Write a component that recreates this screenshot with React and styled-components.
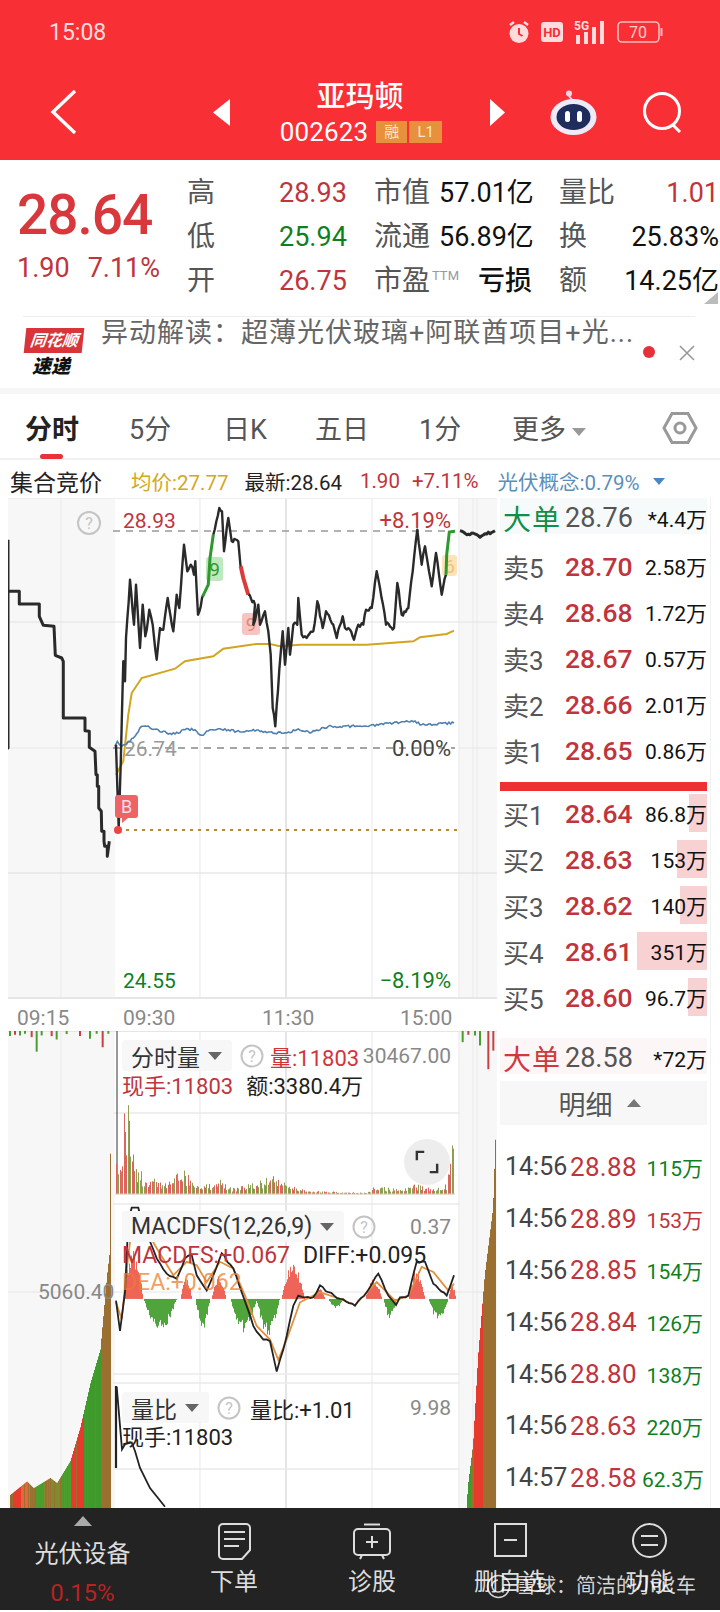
import React from "react";
import styled, { createGlobalStyle } from "styled-components";

const GlobalStyle = createGlobalStyle`
  html, body {
    margin: 0;
    padding: 0;
    background: #fff;
    font-family: Roboto, "Noto Sans CJK SC", sans-serif;
  }
  * { box-sizing: border-box; }
`;

const RED = "#f92f36";
const UP = "#c0343c";
const DOWN = "#0f7f1f";

const Page = styled.div`
  position: relative;
  width: 720px;
  height: 1612px;
  overflow: hidden;
  background: #fff;
  display: flex;
  flex-direction: column;
`;

/* header */
const Header = styled.header`
  height: 160px;
  background: ${RED};
  color: #fff;
  flex: none;
`;
const StatusBar = styled.div`
  display: flex;
  align-items: center;
  height: 64px;
  padding: 0 57px 0 49px;
  color: #ffdcdc;
`;
const Clock = styled.span`
  font-size: 23px;
  margin-right: auto;
`;
const StatusIcons = styled.div`
  display: flex;
  align-items: center;
  gap: 11px;
`;
const NavBar = styled.div`
  display: grid;
  grid-template-columns: 163px 17px 260px 15px 45px 47px 46px 40px;
  align-items: center;
  height: 96px;
  padding: 0 37px 0 50px;
`;
const TitleBlock = styled.div`
  display: flex;
  flex-direction: column;
  align-items: center;
`;
const StockName = styled.div`
  font-size: 29px;
  line-height: 34px;
  font-weight: 500;
  margin-bottom: 6px;
`;
const CodeRow = styled.div`
  display: flex;
  align-items: center;
  gap: 2px;
  height: 24px;
  padding-left: 2px;
`;
const Code = styled.span`
  font-size: 26px;
  letter-spacing: 0.1px;
  margin-right: 6px;
`;
const Badge = styled.span`
  width: ${(p) => p.$w}px;
  height: 22px;
  background: #e8913c;
  color: #fde7c8;
  font-size: 15px;
  text-align: center;
  line-height: 22px;
`;

/* quote */
const Quote = styled.section`
  position: relative;
  display: flex;
  height: 156px;
  padding: 11px 0 0 17px;
  flex: none;
`;
const PriceBlock = styled.div`
  width: 170px;
  color: ${UP};
`;
const BigPrice = styled.div`
  font-size: 55px;
  font-weight: 500;
  line-height: 60px;
  margin-top: 14px;
  letter-spacing: -1px;
  color: #d8383c;
`;
const ChangeRow = styled.div`
  display: flex;
  gap: 18px;
  font-size: 27px;
  line-height: 32px;
  margin-top: 7px;
`;
const StatGrid = styled.div`
  display: grid;
  grid-template-columns: 92px 95px 65px 93px 83px 104px;
  grid-auto-rows: 44px;
  align-items: center;
  height: 132px;
  white-space: nowrap;
`;
const StatLabel = styled.span`
  font-size: 28px;
  line-height: 36px;
  margin: -1px 0 0 ${(p) => p.$ml || 0}px;
  color: #555;
`;
const StatValue = styled.span`
  font-size: 27px;
  line-height: 36px;
  color: ${(p) => p.$color || "#111"};
  text-align: ${(p) => (p.$left ? "left" : "right")};
  font-weight: ${(p) => (p.$bold ? 500 : 400)};
  white-space: nowrap;
`;
const Ttm = styled.sup`
  font-size: 13px;
  color: #999;
  vertical-align: 10px;
  line-height: 0;
  margin-left: 2px;
`;
const CornerMark = styled.div`
  position: absolute;
  right: 2px;
  bottom: 12px;
  width: 0;
  height: 0;
  border-left: 14px solid transparent;
  border-bottom: 12px solid #bbb;
`;

/* news strip */
const News = styled.section`
  position: relative;
  display: flex;
  height: 72px;
  margin: 0 25px 0 23px;
  border-top: 1px solid #eee;
  flex: none;
`;
const NewsLogo = styled.div`
  width: 78px;
  padding: 11px 0 0 2px;
  display: flex;
  flex-direction: column;
  align-items: flex-start;
`;
const LogoTop = styled.div`
  width: 58px;
  height: 25px;
  background: #d8343a;
  color: #fff;
  font-size: 16px;
  font-weight: 700;
  font-style: italic;
  line-height: 25px;
  text-align: center;
  white-space: nowrap;
  overflow: hidden;
  transform: skewX(-6deg);
`;
const LogoBottom = styled.div`
  font-size: 19px;
  font-weight: 900;
  font-style: italic;
  line-height: 21px;
  margin: 3px 0 0 7px;
  color: #111;
`;
const NewsText = styled.div`
  font-size: 27px;
  line-height: 32px;
  color: #666;
  white-space: nowrap;
  letter-spacing: 1px;
`;
const NewsDot = styled.span`
  position: absolute;
  left: 620px;
  top: 29px;
  width: 12px;
  height: 12px;
  border-radius: 50%;
  background: #e5323a;
`;
const NewsClose = styled.span`
  position: absolute;
  left: 656px;
  top: 28px;
  line-height: 0;
`;
const Band = styled.div`
  height: 6px;
  background: #f6f6f6;
  flex: none;
`;

/* tabs */
const Tabs = styled.nav`
  display: grid;
  grid-template-columns: 104px 94px 92px 104px 93px 1fr;
  height: 66px;
  padding-left: 25px;
  border-bottom: 2px solid #f1f1f1;
  position: relative;
  flex: none;
`;
const Tab = styled.div`
  position: relative;
  font-size: 27px;
  line-height: 72px;
  color: ${(p) => (p.$active ? "#222" : "#555")};
  font-weight: ${(p) => (p.$active ? 700 : 400)};
  white-space: nowrap;
  ${(p) =>
    p.$active &&
    `&::after {
      content: "";
      position: absolute;
      left: 15px;
      top: 60px;
      width: 23px;
      height: 5px;
      border-radius: 3px;
      background: #e8323a;
    }`}
`;
const Caret = styled.span`
  display: inline-block;
  width: 0;
  height: 0;
  border-left: ${(p) => p.$size || 7}px solid transparent;
  border-right: ${(p) => p.$size || 7}px solid transparent;
  border-${(p) => (p.$up ? "bottom" : "top")}: ${(p) => (p.$size || 7) + 1}px solid ${(p) => p.$color || "#999"};
`;
const MoreCaret = styled(Caret)`
  margin-left: 6px;
  vertical-align: 3px;
`;
const NavCaret = styled(Caret)`
  margin-top: 8px;
`;
const GearSlot = styled.div`
  position: absolute;
  left: 662px;
  top: 16px;
  line-height: 0;
`;

/* info bar */
const InfoBar = styled.div`
  display: flex;
  align-items: center;
  height: 38px;
  padding: 4px 0 0 10px;
  font-size: 20.5px;
  white-space: nowrap;
  flex: none;
`;
const InfoTitle = styled.span`
  font-size: 23px;
  color: #222;
  width: 121px;
`;
const InfoItem = styled.span`
  color: ${(p) => p.$color || "#222"};
  margin-right: ${(p) => p.$gap}px;
`;

/* body */
const Body = styled.div`
  display: flex;
  height: 1010px;
  padding-left: 8px;
  flex: none;
`;
const ChartColumn = styled.div`
  width: 489px;
  flex: none;
`;
const PriceChart = styled.svg`
  display: block;
  width: 489px;
  height: 501px;
  font-family: Roboto, "Noto Sans CJK SC", sans-serif;
`;
const TimeAxis = styled.div`
  display: grid;
  grid-template-columns: 106px 139px 138px auto;
  height: 32px;
  padding-left: 9px;
  font-size: 21px;
  line-height: 38px;
  color: #888;
`;
const LowerChart = styled.div`
  position: relative;
  height: 477px;
`;
const LowerSvg = styled.svg`
  display: block;
  width: 489px;
  height: 477px;
`;
const Legend = styled.div`
  position: absolute;
  left: 114px;
  top: ${(p) => p.$top}px;
  width: 329px;
  font-size: 22px;
  white-space: nowrap;
`;
const LegendRow = styled.div`
  display: flex;
  align-items: center;
  height: ${(p) => p.$h || 28}px;
`;
const Chip = styled.div`
  display: flex;
  align-items: center;
  gap: 8px;
  height: 31px;
  padding: 0 10px 0 9px;
  background: #f7f7f7;
  border-radius: 3px;
  color: #333;
  font-size: 23px;
  margin-right: 8px;
`;
const LegendText = styled.span`
  color: ${(p) => p.$color || "#222"};
  margin-left: ${(p) => p.$ml || 0}px;
  opacity: ${(p) => p.$fade || 1};
  font-size: ${(p) => p.$size || 22}px;
`;
const AxisValue = styled.span`
  margin-left: auto;
  color: #888;
  font-size: 21px;
`;
const LeftValue = styled.span`
  position: absolute;
  left: 30px;
  top: 249px;
  font-size: 21px;
  color: #888;
`;
const ExpandButton = styled.div`
  position: absolute;
  left: 396px;
  top: 108px;
  width: 46px;
  height: 46px;
  border-radius: 50%;
  background: rgba(215, 215, 215, 0.45);
  display: flex;
  align-items: center;
  justify-content: center;
`;

/* order book */
const BookColumn = styled.aside`
  width: 214px;
  flex: none;
  display: flex;
  flex-direction: column;
  padding: 0 3px;
  border-right: 1px solid #f2f2f2;
`;
const BigRow = styled.div`
  display: grid;
  grid-template-columns: 62px 78px 1fr;
  align-items: center;
  height: 36px;
  padding-left: 3px;
  background: ${(p) => p.$bg};
  margin: ${(p) => p.$margin || 0};
`;
const BigLabel = styled.span`
  font-size: 28px;
  color: ${(p) => p.$color};
  letter-spacing: 1px;
  white-space: nowrap;
`;
const GreyPrice = styled.span`
  font-size: 27px;
  color: #555;
`;
const Qty = styled.span`
  position: relative;
  font-size: 21px;
  color: ${(p) => p.$color || "#111"};
  text-align: right;
  white-space: nowrap;
`;
const BookGroup = styled.div`
  margin-top: ${(p) => p.$mt}px;
`;
const BookRow = styled.div`
  position: relative;
  display: grid;
  grid-template-columns: 62px 78px 1fr;
  align-items: center;
  height: 46px;
  padding-left: 3px;
`;
const BookLabel = styled.span`
  position: relative;
  font-size: 26px;
  color: #555;
  white-space: nowrap;
`;
const BookPrice = styled.span`
  position: relative;
  font-size: 26.5px;
  font-weight: 500;
  color: ${UP};
`;
const QtyBar = styled.span`
  position: absolute;
  right: 0;
  top: 4px;
  bottom: 4px;
  background: #f8d2d2;
`;
const MidBar = styled.div`
  height: 9px;
  margin-top: 9px;
  background: #ee3030;
`;
const DetailBar = styled.div`
  display: flex;
  align-items: center;
  justify-content: center;
  gap: 14px;
  height: 44px;
  margin: 7px 0 16px;
  background: #f7f7f7;
  font-size: 27px;
  color: #555;
  padding-right: 8px;
`;
const TickRow = styled.div`
  display: grid;
  grid-template-columns: 65px 72px 1fr;
  align-items: center;
  height: 51.8px;
  padding: 0 4px 0 5px;
  white-space: nowrap;
`;
const TickTime = styled.span`
  font-size: 25px;
  color: #444;
`;
const TickPrice = styled.span`
  font-size: 26px;
  color: ${UP};
  letter-spacing: 0.3px;
`;

/* bottom bar */
const BottomBar = styled.footer`
  position: relative;
  height: 102px;
  background: #232323;
  display: grid;
  grid-template-columns: 165px 138px 138px 138px 141px;
  color: #ddd;
  flex: none;
`;
const BottomItem = styled.div`
  display: flex;
  flex-direction: column;
  align-items: center;
  font-size: 24px;
  line-height: 30px;
  white-space: nowrap;
  padding-top: ${(p) => p.$pt || 0}px;
`;
const PlateName = styled.span`
  margin-top: 12px;
  line-height: 32px;
`;
const PlatePct = styled.span`
  margin-top: 8px;
  color: #b82222;
`;
const IconSlot = styled.div`
  height: 41px;
  line-height: 0;
  margin-bottom: 3px;
`;
const Watermark = styled.div`
  position: absolute;
  left: 486px;
  top: 64px;
  display: flex;
  align-items: center;
  gap: 5px;
  font-size: 20px;
  line-height: 28px;
  color: rgba(255, 255, 255, 0.82);
  white-space: nowrap;
`;

/* ---- chart data, read off the picture ---- */
const rnd = (i) => Math.abs(Math.sin(i * 12.9898) * 43758.5453) % 1;
const z2 = (pts) => pts.map(([x, y]) => `${(x / 3).toFixed(1)},${(400 + y / 3).toFixed(1)}`).join(" ");
const z3 = (pts) => pts.map(([x, y]) => `${(x / 3).toFixed(1)},${(980 + y / 2.96).toFixed(1)}`).join(" ");
const lerp = (env, x) => {
  for (let i = 1; i < env.length; i++) {
    if (x <= env[i][0]) {
      const [a, b] = [env[i - 1], env[i]];
      return a[1] + ((b[1] - a[1]) * (x - a[0])) / (b[0] - a[0]);
    }
  }
  return env[env.length - 1][1];
};
// the real lines tick every minute, so roughen the read-off points a bit
const jag = (pts, amp, step = 5) => {
  const out = [pts[0]];
  for (let i = 1; i < pts.length; i++) {
    const [a, b] = [pts[i - 1], pts[i]];
    const n = Math.max(1, Math.floor(Math.abs(b[0] - a[0]) / step));
    for (let k = 1; k <= n; k++) {
      const t = k / n;
      const noise = k === n ? 0 : (rnd(a[0] + k * 3.1) - 0.5) * amp;
      out.push([a[0] + (b[0] - a[0]) * t, a[1] + (b[1] - a[1]) * t + noise]);
    }
  }
  return out;
};

const preLine = [[24,425],[24,1050],[24,580],[58,580],[58,618],[118,618],[118,655],[130,682],[162,685],[166,772],[185,780],[190,790],[190,960],[255,960],[255,998],[268,1000],[268,1048],[285,1060],[288,1130],[292,1130],[292,1165],[296,1165],[296,1230],[304,1240],[305,1300],[312,1300],[312,1330],[314,1345],[322,1345],[322,1375],[328,1330]];
const mainA = [[348,1040],[356,1290],[362,1100],[370,790],[375,850],[378,720],[390,545],[402,680],[408,560],[420,750],[428,620],[436,715],[448,635],[458,680],[470,785],[480,690],[490,695],[503,600],[520,700],[530,590],[538,630],[552,440],[562,520],[572,500],[582,530],[586,490],[594,650],[610,590]];
const greenA = [[608,595],[625,560],[630,480],[640,410]];
const mainB = [[640,410],[658,330],[666,340],[672,460],[685,360],[695,430],[715,430],[722,510]];
const redA = [[722,505],[730,540],[745,590]];
const mainC = [[745,590],[765,620],[760,680],[775,620],[780,680],[795,640],[805,700],[812,770],[818,930],[826,985],[838,815],[848,700],[855,800],[865,690],[870,770],[880,680],[892,680],[895,600],[905,710],[920,720],[940,700],[952,610],[968,690],[978,640],[1000,680],[1010,720],[1028,655],[1035,690],[1045,690],[1062,725],[1075,680],[1090,680],[1098,635],[1115,630],[1130,520],[1140,570],[1158,680],[1182,690],[1192,555],[1205,650],[1225,630],[1238,520],[1252,395],[1265,500],[1275,445],[1295,565],[1308,465],[1325,590],[1338,530]];
const greenB = [[1338,530],[1340,470],[1348,402],[1365,400]];
const afterLine = [[1380,398],[1395,406],[1425,408],[1440,418],[1460,408],[1485,398]];
const avgLine = [[348,1130],[370,1090],[385,950],[395,885],[425,840],[525,812],[555,790],[640,775],[670,752],[770,738],[810,738],[840,745],[900,740],[1100,740],[1240,730],[1260,718],[1340,708],[1362,698]];
const blueLine = [[345,1045],[352,1030],[365,1045],[400,1020],[425,985],[440,985],[500,1005],[525,1008],[555,995],[585,995],[605,1012],[630,995],[660,992],[720,1002],[770,996],[790,1003],[860,1005],[890,995],[935,1003],[985,985],[1100,985],[1180,975],[1235,968],[1265,980],[1362,975]];

const volEnv = [[348,460],[362,530],[375,340],[388,360],[398,500],[410,570],[425,570],[440,600],[470,590],[500,610],[548,560],[600,620],[660,590],[700,620],[820,585],[900,625],[950,630],[1100,635],[1125,615],[1200,625],[1240,605],[1300,620],[1340,610],[1350,520],[1362,450]];
const leftEnv = [[30,1530],[80,1490],[100,1510],[150,1480],[170,1495],[210,1430],[240,1330],[270,1200],[300,1100],[320,880],[327,820],[331,420]];
const rightEnv = [[1400,1570],[1405,1500],[1420,1380],[1435,1120],[1455,880],[1480,680],[1488,450]];
const leftBands = [[60,"#e53a2c"],[90,"#e8653c"],[130,"#4c9e2c"],[180,"#7c8e2c"],[210,"#4c9e2c"],[250,"#e53a2c"],[300,"#3f9a2c"],[340,"#9a6f30"]];
const rightBands = [[1420,"#3f9a2c"],[1450,"#e53a2c"],[1500,"#9a6f30"]];
const macdHumps = [[370,430,800,1],[540,575,880,1],[635,680,880,1],[845,915,845,1],[940,975,915,1],[1095,1145,885,1],[1225,1275,860,1],[1345,1368,905,1],[430,530,1050,0],[585,630,1040,0],[690,770,1050,0],[770,840,1060,0],[985,1030,980,0],[1150,1190,1010,0],[1285,1345,1015,0]];
const macdBlack = [[348,955],[360,1045],[375,930],[385,720],[395,680],[415,680],[425,720],[450,780],[470,830],[500,875],[530,890],[555,830],[575,820],[590,880],[620,925],[640,880],[665,815],[700,860],[725,930],[760,1030],[790,1070],[810,1075],[830,1165],[850,1100],[880,970],[895,940],[915,945],[940,945],[960,910],[985,930],[1020,950],[1065,970],[1100,930],[1135,875],[1165,940],[1188,968],[1200,945],[1225,940],[1250,840],[1275,840],[1300,905],[1340,940],[1362,880]];
const macdOrange = [[348,960],[365,1010],[385,820],[400,710],[430,730],[470,800],[520,880],[560,840],[590,850],[620,900],[660,840],[700,860],[735,940],[770,1030],[810,1070],[835,1130],[860,1070],[900,960],[960,930],[1020,950],[1065,968],[1130,900],[1185,955],[1225,940],[1265,855],[1300,870],[1345,925],[1362,905]];
const ratioLine = [[350,1210],[366,1395],[375,1380],[395,1375],[405,1400],[420,1450],[450,1510],[495,1565]];

const GridBase = ({ top, bottom }) => (
  <>
    <rect x="8" y={top} width="107" height={bottom - top} fill="#f7f7f7" />
    <rect x="459" y={top} width="38" height={bottom - top} fill="#f7f7f7" />
    {[61, 200, 372, 459, 473, 477].map((x) => (
      <line key={x} x1={x} x2={x} y1={top} y2={bottom} stroke="#ececec" strokeWidth="1.2" />
    ))}
    <line x1="286" x2="286" y1={top} y2={bottom} stroke="#d4d4d4" strokeWidth="1.2" />
  </>
);

const Help = ({ cx, cy }) => (
  <g fill="none" stroke="#c4c4c4" strokeWidth="2">
    <circle cx={cx} cy={cy} r="11" />
    <text x={cx} y={cy + 6} fontSize="16" textAnchor="middle" fill="#c4c4c4" stroke="none">?</text>
  </g>
);

const HelpIcon = () => (
  <svg width="24" height="24" viewBox="0 0 24 24">
    <circle cx="12" cy="12" r="10.5" fill="none" stroke="#c4c4c4" strokeWidth="2" />
    <text x="12" y="18" fontSize="16" textAnchor="middle" fill="#c4c4c4">?</text>
  </svg>
);

const Marker = ({ x, y, w, h, fill, color, label }) => (
  <g>
    <rect x={x} y={y} width={w} height={h} rx="3" fill={fill} />
    <text x={x + w / 2} y={y + h / 2 + 7} fontSize="19" textAnchor="middle" fill={color}>{label}</text>
  </g>
);

function PricePanel() {
  const dark = { fill: "none", stroke: "#2a2a2a", strokeWidth: 2.4, strokeLinejoin: "round" };
  const green = { fill: "none", stroke: "#2d9a2d", strokeWidth: 3 };
  return (
    <PriceChart viewBox="8 500 489 501">
      <GridBase top={500} bottom={1001} />
      <line x1="8" x2="497" y1="500" y2="500" stroke="#eee" strokeWidth="2" />
      <line x1="8" x2="497" y1="624" y2="624" stroke="#e2e2e2" />
      <line x1="8" x2="497" y1="875" y2="875" stroke="#dcdcdc" />
      <line x1="8" x2="497" y1="1000" y2="1000" stroke="#e6e6e6" strokeWidth="2" />
      <line x1="8" x2="115" y1="750" y2="750" stroke="#e6e6e6" />
      <line x1="459" x2="497" y1="750" y2="750" stroke="#e6e6e6" />
      <line x1="113" x2="455" y1="533" y2="533" stroke="#999" strokeWidth="1.5" strokeDasharray="7 6" />
      <line x1="113" x2="455" y1="750" y2="750" stroke="#888" strokeWidth="1.5" strokeDasharray="7 6" />
      <line x1="118" x2="459" y1="832" y2="832" stroke="#b78a3a" strokeWidth="2" strokeDasharray="3 5" />

      <text x="123" y="530" fontSize="21" fill={UP}>28.93</text>
      <text x="451" y="530" fontSize="22" fill={UP} textAnchor="end">+8.19%</text>
      <text x="124" y="758" fontSize="21" fill="#999">26.74</text>
      <text x="451" y="758" fontSize="22" fill="#444" textAnchor="end">0.00%</text>
      <text x="123" y="990" fontSize="21" fill={DOWN}>24.55</text>
      <text x="451" y="990" fontSize="22" fill={DOWN} textAnchor="end">−8.19%</text>
      <Help cx={89} cy={525} />

      <Marker x={206} y={559} w={17} h={24} fill="#bfe8bf" color="#2d9a2d" label="9" />
      <Marker x={242} y={615} w={18} h={22} fill="#f7c4c4" color="#e08a70" label="9" />
      <Marker x={442} y={557} w={15} h={21} fill="#fce3b8" color="#eec27a" label="6" />
      <polyline points={z2(avgLine)} fill="none" stroke="#d2a521" strokeWidth="2" />
      <polyline points={z2(jag(blueLine, 7))} fill="none" stroke="#4f80b0" strokeWidth="1.6" />
      <polyline points={z2(preLine)} {...dark} strokeWidth="3" />
      <polyline points={z2(jag(mainA, 16, 4))} {...dark} />
      <polyline points={z2(greenA)} {...green} />
      <polyline points={z2(jag(mainB, 16, 4))} {...dark} />
      <polyline points={z2(redA)} fill="none" stroke="#dd3a3a" strokeWidth="4" />
      <polyline points={z2(jag(mainC, 16, 4))} {...dark} />
      <polyline points={z2(greenB)} {...green} />
      <polyline points={z2(jag(afterLine, 8))} {...dark} strokeWidth="3" />

      <rect x="115" y="797" width="23" height="23" rx="3" fill="#ee6464" />
      <path d="M122 820 L128 820 L122 825 Z" fill="#ee6464" />
      <text x="126.5" y="815" fontSize="18" textAnchor="middle" fill="#fde">B</text>
      <circle cx="118" cy="832" r="4" fill="#ee4444" />
    </PriceChart>
  );
}

function VolumeBars() {
  const out = [];
  for (let x = 348; x <= 1362; x += 4) {
    const top = lerp(volEnv, x);
    const h = (640 - top) * (0.35 + 0.65 * rnd(x));
    const red = rnd(x + 7) > 0.5;
    const px = Math.floor(x / 3) + 0.5;
    out.push(
      <line key={x} x1={px} x2={px} y1={980 + 640 / 2.96} y2={980 + (640 - h) / 2.96} stroke={red ? "#d9655c" : "#8ea050"} strokeWidth="1" />
    );
  }
  return out;
}

function SideBars({ env, from, to, bands }) {
  const out = [];
  for (let x = from; x <= to; x += 3) {
    const top = lerp(env, x);
    const base = bands.find((b) => x <= b[0])[1];
    const color = rnd(x) > 0.8 ? "#9a6f30" : base;
    const px = Math.floor(x / 3) + 0.5;
    out.push(
      <line key={x} x1={px} x2={px} y1={1512} y2={980 + top / 2.96} stroke={color} strokeWidth="1" />
    );
  }
  return out;
}

function DripBars() {
  const left = [[30,172],[45,168],[60,170],[75,165],[95,175],[110,218],[125,170],[155,172],[170,182],[200,166],[240,172],[270,180],[290,165],[308,205],[325,165]];
  const right = [[1388,190],[1405,168],[1425,170],[1440,200],[1465,270],[1480,215]];
  return [...left, ...right].map(([x, y], i) => (
    <line key={x} x1={x / 3} x2={x / 3} y1="1033" y2={980 + y / 2.96} stroke={i % 3 === 1 || x > 1450 ? "#c84040" : "#4c9e2c"} strokeWidth="2" />
  ));
}

function MacdBars() {
  const base = 950;
  const out = [];
  macdHumps.forEach(([a, b, peak, up], k) => {
    for (let x = a; x <= b; x += 3) {
      const t = (x - a) / (b - a);
      const env = Math.sin(Math.PI * t);
      const y = base + (peak - base) * env * (0.6 + 0.4 * rnd(x + k));
      const px = Math.floor(x / 3) + 0.5;
      out.push(
        <line key={`${k}-${x}`} x1={px} x2={px} y1={980 + base / 2.96} y2={980 + y / 2.96} stroke={up ? "#ee6458" : "#4fa53c"} strokeWidth="1" />
      );
    }
  });
  return out;
}

function LowerPanel() {
  return (
    <LowerChart>
      <LowerSvg viewBox="8 1033 489 477">
        <GridBase top={1033} bottom={1510} />
        <line x1="8" x2="497" y1="1033" y2="1033" stroke="#e6e6e6" strokeWidth="2" />
        {[1115, 1206, 1376, 1385, 1471].map((y) => (
          <line key={y} x1="113" x2="460" y1={y} y2={y} stroke="#eaeaea" strokeWidth="1.5" />
        ))}
        <line x1="8" x2="497" y1="1294" y2="1294" stroke="#e6e6e6" />
        <SideBars env={leftEnv} from={30} to={331} bands={leftBands} />
        <SideBars env={rightEnv} from={1400} to={1488} bands={rightBands} />
        <DripBars />
        <line x1="117" x2="117" y1="1033" y2="1190" stroke="#333" strokeWidth="1" />
        <VolumeBars />
        <line x1="115" x2="455" y1="1196" y2="1196" stroke="#d8d0c0" strokeWidth="1" />
        <MacdBars />
        <polyline points={z3(macdOrange)} fill="none" stroke="#e0903e" strokeWidth="1.8" />
        <polyline points={z3(jag(macdBlack, 7, 8))} fill="none" stroke="#222" strokeWidth="1.8" />
        <line x1="116" x2="116" y1="1388" y2="1470" stroke="#222" strokeWidth="2.2" />
        <polyline points={z3(ratioLine)} fill="none" stroke="#222" strokeWidth="1.8" />
      </LowerSvg>

      <LeftValue>5060.40</LeftValue>

      <Legend $top={9}>
        <LegendRow $h={31}>
          <Chip>分时量<Caret $color="#666" /></Chip>
          <HelpIcon />
          <LegendText $color="#d4333a" $ml={6}>量:11803</LegendText>
          <AxisValue>30467.00</AxisValue>
        </LegendRow>
        <LegendRow $h={26}>
          <LegendText $color={UP}>现手:11803</LegendText>
          <LegendText $ml={13}>额:3380.4万</LegendText>
        </LegendRow>
      </Legend>

      <Legend $top={180}>
        <LegendRow $h={31}>
          <Chip>MACDFS(12,26,9)<Caret $color="#666" /></Chip>
          <HelpIcon />
          <AxisValue>0.37</AxisValue>
        </LegendRow>
        <LegendRow $h={27}>
          <LegendText $color={UP} $size={23}>MACDFS:+0.067</LegendText>
          <LegendText $ml={13} $size={23}>DIFF:+0.095</LegendText>
        </LegendRow>
        <LegendRow $h={27}>
          <LegendText $color="#ea7f30" $fade={0.75} $size={23}>DEA:+0.062</LegendText>
        </LegendRow>
      </Legend>

      <Legend $top={361}>
        <LegendRow $h={31}>
          <Chip>量比<Caret $color="#666" /></Chip>
          <HelpIcon />
          <LegendText $ml={9}>量比:+1.01</LegendText>
          <AxisValue>9.98</AxisValue>
        </LegendRow>
        <LegendRow $h={24}>
          <LegendText>现手:11803</LegendText>
        </LegendRow>
      </Legend>

      <ExpandButton>
        <svg width="24" height="24" viewBox="0 0 26 26" fill="none" stroke="#333" strokeWidth="2.6">
          <path d="M2 11V2H10" />
          <path d="M24 15V24H16" />
        </svg>
      </ExpandButton>
    </LowerChart>
  );
}

const asks = [
  ["卖5", "28.70", "2.58万"],
  ["卖4", "28.68", "1.72万"],
  ["卖3", "28.67", "0.57万"],
  ["卖2", "28.66", "2.01万"],
  ["卖1", "28.65", "0.86万"],
];
const bids = [
  ["买1", "28.64", "86.8万", 18],
  ["买2", "28.63", "153万", 30],
  ["买3", "28.62", "140万", 27],
  ["买4", "28.61", "351万", 70],
  ["买5", "28.60", "96.7万", 19],
];
const ticks = [
  ["14:56", "28.88", "115万", DOWN],
  ["14:56", "28.89", "153万", UP],
  ["14:56", "28.85", "154万", DOWN],
  ["14:56", "28.84", "126万", DOWN],
  ["14:56", "28.80", "138万", DOWN],
  ["14:56", "28.63", "220万", DOWN],
  ["14:57", "28.58", "62.3万", DOWN],
];

function OrderBook() {
  return (
    <BookColumn>
      <BigRow $bg="#f7fafa">
        <BigLabel $color="#0f8f4a">大单</BigLabel>
        <GreyPrice>28.76</GreyPrice>
        <Qty>*4.4万</Qty>
      </BigRow>
      <BookGroup $mt={9}>
        {asks.map(([label, price, qty]) => (
          <BookRow key={label}>
            <BookLabel>{label}</BookLabel>
            <BookPrice>{price}</BookPrice>
            <Qty>{qty}</Qty>
          </BookRow>
        ))}
      </BookGroup>
      <MidBar />
      <BookGroup $mt={-1}>
        {bids.map(([label, price, qty, w]) => (
          <BookRow key={label}>
            <QtyBar style={{ width: w }} />
            <BookLabel>{label}</BookLabel>
            <BookPrice>{price}</BookPrice>
            <Qty>{qty}</Qty>
          </BookRow>
        ))}
      </BookGroup>
      <BigRow $bg="#fdf6f6" $margin="18px 0 0">
        <BigLabel $color="#d0393c">大单</BigLabel>
        <GreyPrice>28.58</GreyPrice>
        <Qty>*72万</Qty>
      </BigRow>
      <DetailBar>
        明细
        <Caret $up $size={7} $color="#777" />
      </DetailBar>
      {ticks.map(([time, price, vol, color], i) => (
        <TickRow key={i}>
          <TickTime>{time}</TickTime>
          <TickPrice>{price}</TickPrice>
          <Qty $color={color}>{vol}</Qty>
        </TickRow>
      ))}
    </BookColumn>
  );
}

const StatusGlyphs = () => (
  <StatusIcons>
    <svg width="22" height="24" viewBox="0 0 22 24">
      <circle cx="11" cy="13.5" r="9.5" fill="#ffdcdc" />
      <path d="M11 8v6l3.5 2" fill="none" stroke={RED} strokeWidth="2" />
      <path d="M2 5l4-3M20 5l-4-3" stroke="#ffdcdc" strokeWidth="2.4" />
    </svg>
    <svg width="22" height="20" viewBox="0 0 22 20">
      <rect width="22" height="20" rx="3" fill="#ffdcdc" />
      <text x="11" y="15" fontSize="13" fontWeight="700" textAnchor="middle" fill={RED}>HD</text>
    </svg>
    <svg width="32" height="24" viewBox="0 0 32 24">
      <text x="0" y="10" fontSize="12" fontWeight="700" fill="#ffdcdc">5G</text>
      <g fill="#ffdcdc">
        <rect x="2" y="15" width="4" height="9" />
        <rect x="10" y="12" width="4" height="12" />
        <rect x="18" y="7" width="4" height="17" />
        <rect x="26" y="1" width="4" height="23" />
      </g>
    </svg>
    <svg width="46" height="22" viewBox="0 0 46 22">
      <rect x="1" y="1" width="41" height="20" rx="4" fill="none" stroke="#ffbcbc" strokeWidth="1.6" />
      <rect x="43.5" y="7" width="2" height="8" fill="#ffbcbc" />
      <text x="21" y="17" fontSize="16" textAnchor="middle" fill="#ffcfcf">70</text>
    </svg>
  </StatusIcons>
);

const Robot = () => (
  <svg width="47" height="45" viewBox="0 0 47 45">
    <circle cx="19" cy="3.5" r="3" fill="#f3d5ea" />
    <path d="M19 6 L23 11" stroke="#f3d5ea" strokeWidth="2" />
    <ellipse cx="23.5" cy="27" rx="23" ry="18" fill="#eeeaf8" />
    <ellipse cx="23.5" cy="27" rx="17" ry="13" fill="#1f2d5c" />
    <rect x="15" y="21" width="5" height="11" rx="2.5" fill="#fff" />
    <rect x="27" y="21" width="5" height="11" rx="2.5" fill="#fff" />
  </svg>
);

const MenuIcon = () => (
  <svg width="33" height="37" viewBox="0 0 33 37" fill="none" stroke="#ddd" strokeWidth="2">
    <path d="M5 1h23a4 4 0 0 1 4 4v22l-8 9H5a4 4 0 0 1-4-4V5a4 4 0 0 1 4-4z" />
    <path d="M6 9h21M6 16h21M6 23h15" />
  </svg>
);

const DiagnoseIcon = () => (
  <svg width="38" height="37" viewBox="0 0 38 37" fill="none" stroke="#ddd" strokeWidth="2">
    <path d="M11 1.5h16" />
    <rect x="1" y="6" width="36" height="26" rx="4" />
    <path d="M19 13v12M13 19h12" />
    <path d="M7 36l2-4M31 36l-2-4" />
  </svg>
);

const RemoveIcon = () => (
  <svg width="33" height="34" viewBox="0 0 33 34" fill="none" stroke="#ddd" strokeWidth="2">
    <rect x="1" y="1" width="31" height="32" />
    <path d="M10 17h13" />
  </svg>
);

const MoreIcon = () => (
  <svg width="35" height="35" viewBox="0 0 35 35" fill="none" stroke="#ddd" strokeWidth="2">
    <circle cx="17.5" cy="17.5" r="16.5" />
    <path d="M9 13h17M9 22h17" />
  </svg>
);

export default function App() {
  return (
    <Page>
      <GlobalStyle />
      <Header>
        <StatusBar>
          <Clock>15:08</Clock>
          <StatusGlyphs />
        </StatusBar>
        <NavBar>
          <svg width="27" height="46" viewBox="0 0 27 46" fill="none" stroke="#fff" strokeWidth="3.4">
            <path d="M25 2 L3 23 L25 44" />
          </svg>
          <svg width="17" height="27" viewBox="0 0 17 27"><path d="M17 0V27L0 13.5Z" fill="#fff" /></svg>
          <TitleBlock>
            <StockName>亚玛顿</StockName>
            <CodeRow>
              <Code>002623</Code>
              <Badge $w={31}>融</Badge>
              <Badge $w={33}>L1</Badge>
            </CodeRow>
          </TitleBlock>
          <svg width="15" height="27" viewBox="0 0 15 27"><path d="M0 0V27L15 13.5Z" fill="#fff" /></svg>
          <span />
          <Robot />
          <span />
          <svg width="40" height="42" viewBox="0 0 40 42" fill="none" stroke="#fff" strokeWidth="3">
            <circle cx="19" cy="20" r="17.5" />
            <path d="M29 33 L37 41" />
          </svg>
        </NavBar>
      </Header>

      <Quote>
        <PriceBlock>
          <BigPrice>28.64</BigPrice>
          <ChangeRow>
            <span>1.90</span>
            <span>7.11%</span>
          </ChangeRow>
        </PriceBlock>
        <StatGrid>
          <StatLabel>高</StatLabel>
          <StatValue $color={UP} $left>28.93</StatValue>
          <StatLabel>市值</StatLabel>
          <StatValue>57.01亿</StatValue>
          <StatLabel $ml={27}>量比</StatLabel>
          <StatValue $color={UP}>1.01</StatValue>

          <StatLabel>低</StatLabel>
          <StatValue $color={DOWN} $left>25.94</StatValue>
          <StatLabel>流通</StatLabel>
          <StatValue>56.89亿</StatValue>
          <StatLabel $ml={27}>换</StatLabel>
          <StatValue>25.83%</StatValue>

          <StatLabel>开</StatLabel>
          <StatValue $color={UP} $left>26.75</StatValue>
          <StatLabel>市盈<Ttm>TTM</Ttm></StatLabel>
          <StatValue $bold>亏损</StatValue>
          <StatLabel $ml={27}>额</StatLabel>
          <StatValue>14.25亿</StatValue>
        </StatGrid>
        <CornerMark />
      </Quote>

      <News>
        <NewsLogo>
          <LogoTop>同花顺</LogoTop>
          <LogoBottom>速递</LogoBottom>
        </NewsLogo>
        <NewsText>异动解读：超薄光伏玻璃+阿联酋项目+光...</NewsText>
        <NewsDot />
        <NewsClose>
          <svg width="16" height="16" viewBox="0 0 16 16" stroke="#999" strokeWidth="1.6">
            <path d="M1 1L15 15M15 1L1 15" />
          </svg>
        </NewsClose>
      </News>
      <Band />

      <Tabs>
        <Tab $active>分时</Tab>
        <Tab>5分</Tab>
        <Tab>日K</Tab>
        <Tab>五日</Tab>
        <Tab>1分</Tab>
        <Tab>更多<MoreCaret /></Tab>
        <GearSlot>
          <svg width="36" height="36" viewBox="0 0 36 36" fill="none" stroke="#999" strokeWidth="3">
            <path d="M10 3.5H26L34 18L26 32.5H10L2 18Z" />
            <circle cx="18" cy="18" r="5" />
          </svg>
        </GearSlot>
      </Tabs>

      <InfoBar>
        <InfoTitle>集合竞价</InfoTitle>
        <InfoItem $color="#d4a820" $gap={16}>均价:27.77</InfoItem>
        <InfoItem $gap={18}>最新:28.64</InfoItem>
        <InfoItem $color={UP} $gap={12}>1.90</InfoItem>
        <InfoItem $color={UP} $gap={19}>+7.11%</InfoItem>
        <InfoItem $color="#5b8fb9" $gap={13}>光伏概念:0.79%</InfoItem>
        <Caret $size={6} $color="#4a86c5" />
      </InfoBar>

      <Body>
        <ChartColumn>
          <PricePanel />
          <TimeAxis>
            <span>09:15</span>
            <span>09:30</span>
            <span>11:30</span>
            <span>15:00</span>
          </TimeAxis>
          <LowerPanel />
        </ChartColumn>
        <OrderBook />
      </Body>

      <BottomBar>
        <BottomItem>
          <NavCaret $up $size={9} $color="#aaa" />
          <PlateName>光伏设备</PlateName>
          <PlatePct>0.15%</PlatePct>
        </BottomItem>
        <BottomItem $pt={15}>
          <IconSlot><MenuIcon /></IconSlot>
          下单
        </BottomItem>
        <BottomItem $pt={15}>
          <IconSlot><DiagnoseIcon /></IconSlot>
          诊股
        </BottomItem>
        <BottomItem $pt={15}>
          <IconSlot><RemoveIcon /></IconSlot>
          删自选
        </BottomItem>
        <BottomItem $pt={15}>
          <IconSlot><MoreIcon /></IconSlot>
          功能
        </BottomItem>
        <Watermark>
          <svg width="25" height="25" viewBox="0 0 25 25" fill="none" stroke="rgba(255,255,255,.8)" strokeWidth="1.6">
            <circle cx="12.5" cy="12.5" r="11" />
            <path d="M12 6a6 6 0 1 0 6 7" />
          </svg>
          雪球：简洁的小火车
        </Watermark>
      </BottomBar>
    </Page>
  );
}
